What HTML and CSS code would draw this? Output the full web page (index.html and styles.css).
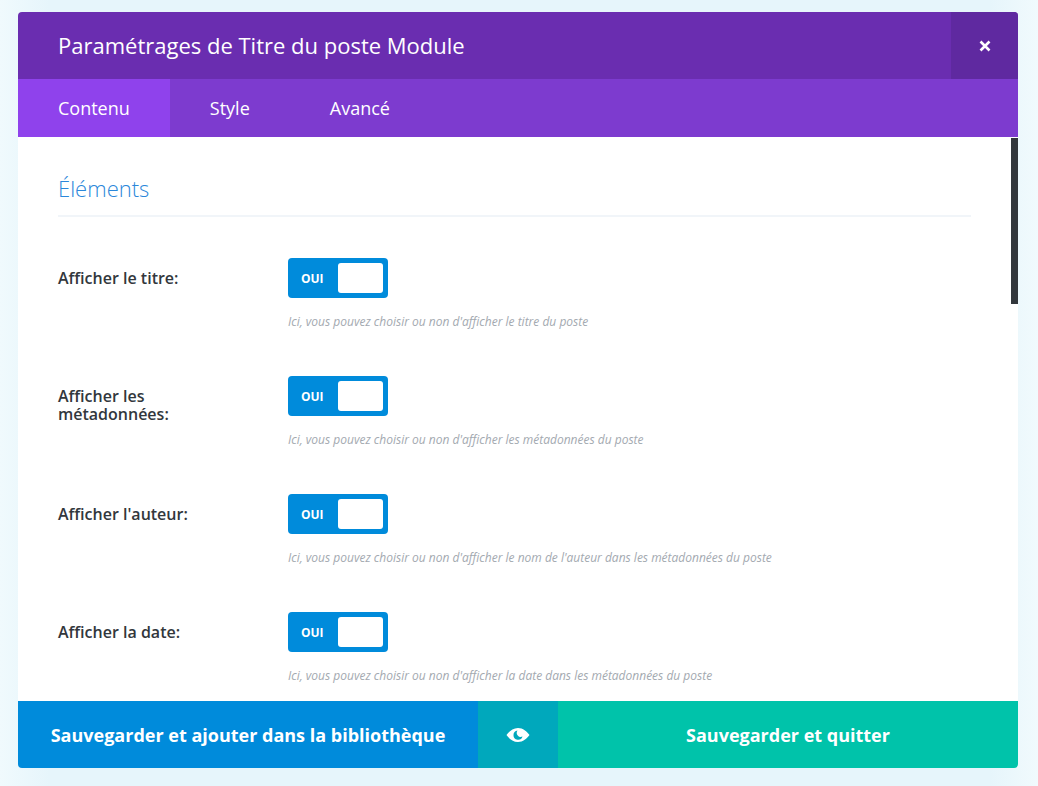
FILE: index.html
```html
<!DOCTYPE html>
<html lang="fr">
<head>
<meta charset="utf-8">
<title>Paramétrages de Titre du poste Module</title>
<link rel="stylesheet" href="styles.css">
</head>
<body>
<div class="modal">
  <header class="head">
    <h1 class="title">Paramétrages de Titre du poste Module</h1>
    <button class="close" aria-label="Fermer">
      <svg width="12" height="12" viewBox="0 0 12 12"><path d="M1.5 1.5L10.5 10.5M10.5 1.5L1.5 10.5" stroke="#fff" stroke-width="2.6" fill="none"/></svg>
    </button>
  </header>
  <nav class="tabs">
    <a class="tab active">Contenu</a>
    <a class="tab">Style</a>
    <a class="tab">Avancé</a>
  </nav>
  <main class="body">
    <h2 class="section">Éléments</h2>
    <div class="row">
      <label class="label">Afficher le titre:</label>
      <div class="field">
        <div class="toggle"><span class="oui">OUI</span><span class="knob"></span></div>
        <p class="desc">Ici, vous pouvez choisir ou non d'afficher le titre du poste</p>
      </div>
    </div>
    <div class="row">
      <label class="label">Afficher les métadonnées:</label>
      <div class="field">
        <div class="toggle"><span class="oui">OUI</span><span class="knob"></span></div>
        <p class="desc">Ici, vous pouvez choisir ou non d'afficher les métadonnées du poste</p>
      </div>
    </div>
    <div class="row">
      <label class="label">Afficher l'auteur:</label>
      <div class="field">
        <div class="toggle"><span class="oui">OUI</span><span class="knob"></span></div>
        <p class="desc">Ici, vous pouvez choisir ou non d'afficher le nom de l'auteur dans les métadonnées du poste</p>
      </div>
    </div>
    <div class="row">
      <label class="label">Afficher la date:</label>
      <div class="field">
        <div class="toggle"><span class="oui">OUI</span><span class="knob"></span></div>
        <p class="desc">Ici, vous pouvez choisir ou non d'afficher la date dans les métadonnées du poste</p>
      </div>
    </div>
    <div class="scrollbar"></div>
  </main>
  <footer class="foot">
    <a class="btn lib">Sauvegarder et ajouter dans la bibliothèque</a>
    <a class="btn eye" aria-label="Aperçu">
      <svg width="24" height="16" viewBox="0 0 24 16"><path fill="#fff" fill-rule="evenodd" d="M12 1C17 1 21 4.500 23.500 8 21 11.500 17 15 12 15 7 15 3 11.500.5 8 3 4.500 7 1 12 1ZM11.500 3.600A4.600 4.600 0 1 0 16.500 9.500 4 4 0 0 1 11.500 3.600Z"/></svg>
    </a>
    <a class="btn save">Sauvegarder et quitter</a>
  </footer>
</div>
</body>
</html>
```
FILE: styles.css
```css
* { box-sizing: border-box; }
html, body { height: 100%; }
body {
  margin: 0;
  padding: 12px 20px 18px 18px;
  overflow: hidden;
  font-family: "Open Sans", sans-serif;
  background: linear-gradient(90deg, #f0fafd 0, #e6f5fb 50px, #e6f5fb 990px, #f1fafd 100%);
}
.modal {
  width: 1000px;
  height: 756px;
  display: flex;
  flex-direction: column;
  background: #fff;
  border-radius: 4px;
  overflow: hidden;
}
.head {
  flex: 0 0 67px;
  display: flex;
  align-items: center;
  justify-content: space-between;
  background: #6a2db0;
}
.title {
  margin: 0 0 1px 40px;
  font-size: 22px;
  font-weight: 400;
  line-height: 30px;
  color: #fff;
}
.close {
  width: 67px;
  height: 67px;
  border: 0;
  padding: 0;
  display: flex;
  align-items: center;
  justify-content: center;
  background: #5f29a0;
}
.tabs {
  flex: 0 0 58px;
  display: flex;
  background: #7d3bcf;
}
.tab {
  padding: 0 40px;
  font-size: 18px;
  font-weight: 400;
  line-height: 58px;
  color: #fff;
}
.tab.active { background: #8f42ec; }
.body {
  position: relative;
  flex: 1;
  min-height: 0;
  overflow: hidden;
  padding: 0 47px 0 40px;
}
.section {
  margin: 0 0 41px;
  padding: 35px 0 11px;
  height: 80px;
  border-bottom: 2px solid #f1f5f9;
  font-size: 22px;
  font-weight: 300;
  line-height: 32px;
  color: #2b87da;
}
.row {
  display: flex;
  height: 118px;
}
.label {
  flex: 0 0 230px;
  padding: 11px 40px 0 0;
  font-size: 16px;
  font-weight: 600;
  line-height: 18px;
  color: #32373c;
}
.field { flex: 1; }
.toggle {
  width: 100px;
  height: 40px;
  padding: 5px;
  display: flex;
  align-items: center;
  justify-content: space-between;
  border-radius: 4px;
  background: #008bdb;
}
.oui {
  padding-left: 8px;
  font-size: 12px;
  font-weight: 700;
  color: #fff;
}
.knob {
  width: 45px;
  height: 30px;
  border-radius: 3px;
  background: #fff;
}
.desc {
  margin: 15px 0 0;
  font-size: 12px;
  font-style: italic;
  line-height: 18px;
  color: #a3a9b0;
}
.scrollbar {
  position: absolute;
  top: 1px;
  right: 0;
  width: 7px;
  height: 166px;
  background: #32373c;
}
.foot {
  flex: 0 0 67px;
  display: flex;
}
.btn {
  display: flex;
  align-items: center;
  justify-content: center;
  font-size: 18px;
  font-weight: 700;
  color: #fff;
}
.lib { flex: 0 0 460px; background: #008bdb; }
.eye { flex: 0 0 80px; background: #00a8bc; }
.save { flex: 1; background: #00c3aa; }
```
